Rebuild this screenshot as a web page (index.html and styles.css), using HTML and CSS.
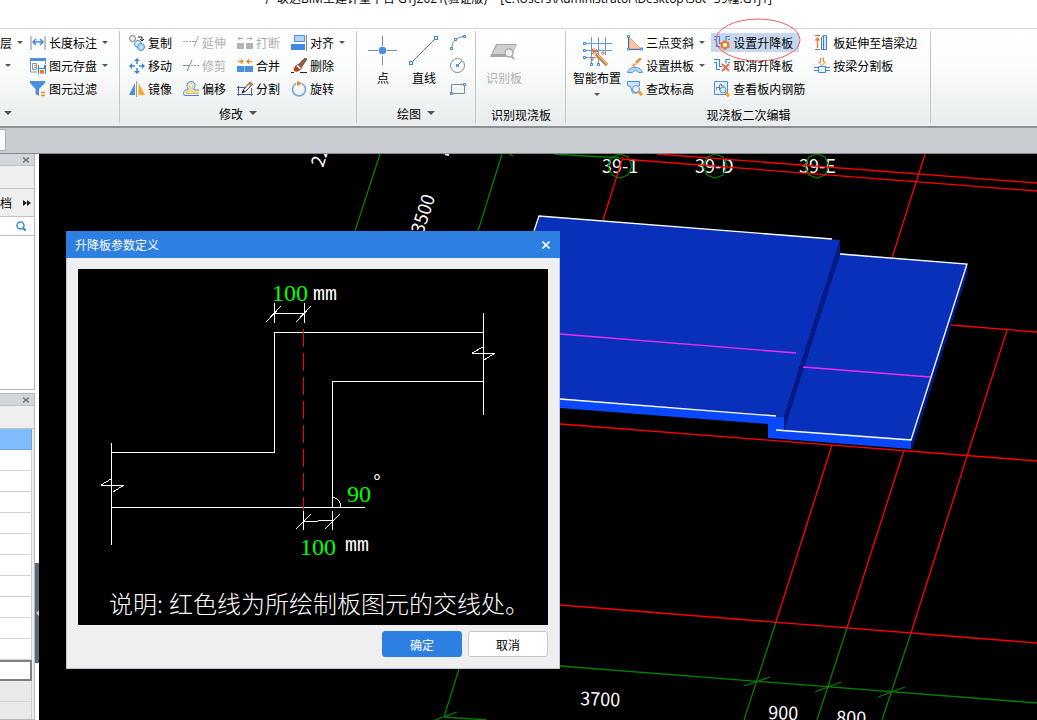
FILE: index.html
```html
<!DOCTYPE html>
<html lang="zh-CN">

<head>
	<meta charset="UTF-8" />
	<meta name="viewport" content="width=device-width, initial-scale=1.0" />
	<title>广联达BIM土建计量平台 GTJ2021</title>
	<link rel="stylesheet" href="styles.css">
</head>

<body>
	<div class="app">
		<header class="titlebar">
			<h1 class="title">广联达BIM土建计量平台 GTJ2021(验证版) -  [C:\Users\Administrator\Desktop\38、39幢.GTJ1]</h1>
		</header>

		<nav class="ribbon">
			<section class="group group-general">
				<div class="tools">
					<div class="column column-cut">
						<button class="tool" type="button">层<i class="caret"></i></button>
						<button class="tool" type="button" aria-label="更多"><i class="caret"></i></button>
					</div>
					<div class="column">
						<button class="tool" type="button">
							<svg class="icon" viewBox="0 0 16 16"><path d="M1 1v14M15 1v14" stroke="#7d8b94" fill="none" /><path d="M3 7h10M6 4 3 7l3 3M10 4l3 3-3 3" stroke="#3b87d6" stroke-width="1.4" fill="none" /></svg>
							长度标注<i class="caret"></i>
						</button>
						<button class="tool" type="button">
							<svg class="icon" viewBox="0 0 16 16"><path d="M.5 1v13H7M15.5 1v5" stroke="#7d97b0" fill="none" /><path d="M0 0h16v3H0z" fill="#4a8fdc" /><path d="M2.500 5.500h4v6h-4zM4 7.500h2M4 9.500h2" stroke="#8797a5" fill="none" /><path d="M8 7h8v8.500H8z" fill="#3f7fc8" /><path d="M9 7h5v3H9z" fill="#fff" /><path d="M9 11h6v4H9z" fill="#fff" /><path d="M10 12h4v3h-4z" fill="#f47a1c" /></svg>
							图元存盘<i class="caret"></i>
						</button>
						<button class="tool" type="button">
							<svg class="icon" viewBox="0 0 16 16"><path d="M0 0h15v2l-6 6v7L5.500 13V8L0 2z" fill="#4a90dc" /><path d="M11 11.500h4M11 14.500h4" stroke="#f0862a" stroke-width="1.500" /></svg>
							图元过滤
						</button>
					</div>
				</div>
				<h2 class="group-label label-cut"><i class="caret wide"></i></h2>
			</section>

			<section class="group group-modify">
				<div class="tools">
					<div class="column">
						<button class="tool" type="button">
							<svg class="icon" viewBox="0 0 16 16"><circle cx="3.500" cy="3.500" r="3" fill="#eee" stroke="#777" /><path d="M9 2h4v4M11 4l2 2 2-2" stroke="#222" fill="none" /><circle cx="9" cy="9" r="3.500" fill="#d8ebf8" stroke="#4a90c8" /><circle cx="12" cy="12" r="3.500" fill="#b5dcf3" stroke="#4a90c8" /></svg>
							复制
						</button>
						<button class="tool" type="button">
							<svg class="icon" viewBox="0 0 16 16"><path d="M8 1v5M8 10v5M1 8h5M10 8h5" stroke="#3b87d6" stroke-width="1.500" /><path d="M8 0l3 3H5zM8 16l3-3H5zM0 8l3-3v6zM16 8l-3-3v6z" fill="#3b87d6" /></svg>
							移动
						</button>
						<button class="tool" type="button">
							<svg class="icon" viewBox="0 0 16 16"><path d="M6 2v12H0z" fill="#4a90dc" /><path d="M9.500 2v12H16z" fill="#f9a825" /><path d="M7.500 0v16" stroke="#9a9a9a" /></svg>
							镜像
						</button>
					</div>
					<div class="column">
						<button class="tool" type="button" disabled>
							<svg class="icon" viewBox="0 0 16 16"><path d="M0 6.500h10" stroke="#aaa" stroke-dasharray="2 1" /><path d="M15.500 1 11 12M10 6.500h4" stroke="#aaa" fill="none" /></svg>
							延伸
						</button>
						<button class="tool" type="button" disabled>
							<svg class="icon" viewBox="0 0 16 16"><path d="M0 7.500h6M9 2 4 13" stroke="#888" fill="none" /><path d="M8 7.500h8" stroke="#999" stroke-dasharray="2 1" /></svg>
							修剪
						</button>
						<button class="tool" type="button">
							<svg class="icon" viewBox="0 0 16 16"><path d="M16 14.500H2Q.5 14.500.5 12.500T2.500 9H5V7Q3.500 5 4 3.500 4.500.5 8 .5t4 3Q12.500 5 11 7v2h5" fill="none" stroke="#4a86cc" /><path d="M16 12.500H3V11h4V6.500Q5.500 5 6 3.500 6.500 2.500 8 2.500t2 1Q10.500 5 9 6.500V11h7" fill="none" stroke="#f2b94a" /></svg>
							偏移
						</button>
					</div>
					<div class="column">
						<button class="tool" type="button" disabled>
							<svg class="icon" viewBox="0 0 16 16"><path d="M0 8h7v6H0zM9 8h7v6H9z" fill="#b4b4b4" /><path d="M1 3.500h5M3 1.500l-2 2 2 2M10 3.500h5M13 1.500l2 2-2 2" stroke="#aaa" fill="none" /></svg>
							打断
						</button>
						<button class="tool" type="button">
							<svg class="icon" viewBox="0 0 16 16"><path d="M0 8h7.500v6H0zM8 8h8v6H8z" fill="#4a90dc" /><path d="M1 3.500h5M4 1.500l2 2-2 2M15 3.500h-5M12 1.500l-2 2 2 2" stroke="#e88a25" stroke-width="1.300" fill="none" /></svg>
							合并
						</button>
						<button class="tool" type="button">
							<svg class="icon" viewBox="0 0 16 16"><path d="M1.500 5v10M14.500 7v8M0 6.500h10M0 13.500h16" stroke="#44619c" fill="none" /><path d="M5 12l2-4 6-7 2.500 2L9 10z" fill="#fff" stroke="#333" /><path d="M11 3l2-2.500 2.500 2L13 5z" fill="#d97a45" /><path d="M5 12l1-3 2 1.500z" fill="#222" /></svg>
							分割
						</button>
					</div>
					<div class="column">
						<button class="tool" type="button">
							<svg class="icon" viewBox="0 0 16 16"><path d="M3.500.5h10v6h-10z" fill="#b5d2f8" stroke="#4a90dc" /><path d="M0 9h14v6H0z" fill="#3f8ade" /><path d="M15.500 0v16" stroke="#888" /></svg>
							对齐<i class="caret"></i>
						</button>
						<button class="tool" type="button">
							<svg class="icon" viewBox="0 0 16 16"><path d="M7 7l7-7 2 1-6 9z" fill="#9b603a" stroke="#4c2c1a" stroke-width=".7" /><path d="M4.500 8 7 6.500 10.500 10 9 12z" fill="#eee" stroke="#333" stroke-width=".7" /><path d="M3 13q-1-4 2-5l4 4q-2 3-6 1z" fill="#c83c14" /><path d="M0 14.500h3M9 14.500h7" stroke="#222" /></svg>
							删除
						</button>
						<button class="tool" type="button">
							<svg class="icon" viewBox="0 0 16 16"><path d="M11 2.700A6.500 6.500 0 1 1 5 2.700" stroke="#68a2e0" stroke-width="1.500" fill="none" /><path d="M6 0l5 2.200L6 5z" fill="#f08420" /></svg>
							旋转
						</button>
					</div>
				</div>
				<h2 class="group-label">修改<i class="caret wide"></i></h2>
			</section>

			<section class="group group-draw">
				<div class="tools">
					<button class="tool-big" type="button">
						<svg class="icon-big" viewBox="0 0 30 30"><path d="M14.500 0v10M14.500 20v9M0 14.500h10M19 14.500h10" stroke="#7d8b94" fill="none" /><circle cx="14.500" cy="14.500" r="3.800" fill="#4a90e2" /></svg>
						点
					</button>
					<button class="tool-big" type="button">
						<svg class="icon-big" viewBox="0 0 30 30"><path d="M3 26 26 3" stroke="#666f76" /><path d="M.5 25.500h3v3h-3zM25.500.5h3v3h-3z" fill="#fff" stroke="#3b87d6" stroke-width="1.200" /></svg>
						直线
					</button>
					<div class="column">
						<button class="tool" type="button" aria-label="弧线">
							<svg class="icon" viewBox="0 0 16 16"><path d="M1.500 13Q3 2 14 1.500" stroke="#7d8b94" fill="none" /><path d="M.5 12.500h2v2h-2zM4.500 3.500h2v2h-2zM13.500.5h2v2h-2z" fill="#fff" stroke="#3b87d6" /></svg>
						</button>
						<button class="tool" type="button" aria-label="圆">
							<svg class="icon" viewBox="0 0 16 16"><circle cx="7.500" cy="7.500" r="7" fill="none" stroke="#7d8b94" /><path d="M8 7l4-4" stroke="#3b87d6" /><path d="M6.500 6.500h2v2h-2z" fill="#fff" stroke="#3b87d6" /></svg>
						</button>
						<button class="tool" type="button" aria-label="矩形">
							<svg class="icon" viewBox="0 0 16 16"><path d="M1.500 3.500h13v9h-13z" fill="none" stroke="#7d8b94" /><path d="M.5 11.500h2v2h-2zM13.500 2.500h2v2h-2z" fill="#fff" stroke="#3b87d6" /></svg>
						</button>
					</div>
				</div>
				<h2 class="group-label">绘图<i class="caret wide"></i></h2>
			</section>

			<section class="group group-detect">
				<div class="tools">
					<button class="tool-big" type="button" disabled>
						<svg class="icon-big" viewBox="0 0 30 30"><path d="M7 8h21l-6 13H1z" fill="#a5a5a5" /><path d="M8 9h19l-4.500 9H3.500z" fill="#cfcfcf" /><circle cx="20" cy="17" r="4" fill="#eee" stroke="#aaa" stroke-width="1.500" /><path d="M22 20l3 3" stroke="#aaa" stroke-width="2" /></svg>
						识别板
					</button>
				</div>
				<h2 class="group-label label-plain">识别现浇板</h2>
			</section>

			<section class="group group-slab">
				<div class="tools">
					<button class="tool-big" type="button">
						<svg class="icon-big" viewBox="0 0 30 30"><path d="M9.500 1v28M16.500 1v28M23.500 1v18M2 7.500h28M2 14.500h28M2 21.500h12" stroke="#5b9be0" fill="none" /><path d="M1.500 6.500h2v2h-2zM1.500 13.500h2v2h-2zM1.500 20.500h2v2h-2zM8.500 27.500h2v2h-2zM15.500 27.500h2v2h-2z" fill="#fff" stroke="#3b87d6" /><path d="M14 18l11 11" stroke="#c88445" stroke-width="3.500" /><path d="M14 17l11 11" stroke="#f3cfa5" /><path d="M12 12v7M9 15.500h7M10 13l5 5M15 13l-5 5M21 15v4M19 17h4M10 21v4M8 23h4" stroke="#f06a30" /></svg>
						智能布置<i class="caret"></i>
					</button>
					<div class="columns">
						<div class="column">
							<button class="tool" type="button">
								<svg class="icon" viewBox="0 0 16 16"><path d="M2 2l12 12H2z" fill="#f9c6a0" stroke="#e49b6a" /><path d="M1.500 1v14M2 14.500h12" stroke="#3b6ea8" /><path d="M.5.5h2v2h-2zM.5 13h2v2h-2zM13.500 13h2v2h-2z" fill="#fff" stroke="#3b87d6" /></svg>
								三点变斜<i class="caret"></i>
							</button>
							<button class="tool" type="button">
								<svg class="icon" viewBox="0 0 16 16"><path d="M14 0 9 5M8 6 6 8" stroke="#f08a35" stroke-width="2.500" /><path d="M6 6l2 2-3 1z" fill="#f6b16b" /><path d="M.5 14.500Q2 9 8 9.500q6-.5 7.500 5h-4q-3-4-6 0z" fill="#b9d3f3" stroke="#5b95d5" /></svg>
								设置拱板<i class="caret"></i>
							</button>
							<button class="tool" type="button">
								<svg class="icon" viewBox="0 0 16 16"><path d="M.5.500h12v4l-2 1V12h-5L3.500 5.500l-3-1z" fill="#cfe2f8" stroke="#4a90dc" /><circle cx="9" cy="8" r="3.500" fill="#e5f1ff" stroke="#6993cc" /><path d="M11.500 10.500l3.500 3.500" stroke="#f09a25" stroke-width="3" /></svg>
								查改标高
							</button>
						</div>
						<div class="column">
							<button class="tool active" type="button">
								<svg class="icon" viewBox="0 0 16 16"><path d="M0 1.500h5.500v7H8M0 4.500h2.500v7H6M16 1.500h-4v4M16 4.500h-2" stroke="#3b87d6" stroke-width="1.200" fill="none" /><circle cx="11" cy="10" r="3.200" fill="#fff" stroke="#f07a28" stroke-width="2.200" /><path d="M11 5v2M11 13v2M6.700 7.500l1.600 1M13.700 11.500l1.600 1M6.700 12.500l1.600-1M13.700 8.500l1.600-1" stroke="#f07a28" stroke-width="1.800" /></svg>
								设置升降板
								<svg class="ring" viewBox="0 0 86 44"><ellipse cx="43" cy="22" rx="42" ry="21" fill="none" stroke="#ee5a62" /></svg>
							</button>
							<button class="tool" type="button">
								<svg class="icon" viewBox="0 0 16 16"><path d="M0 1.500h5.500v7H8M0 4.500h2.500v7H6M16 1.500h-4v4M16 4.500h-2" stroke="#3b87d6" stroke-width="1.200" fill="none" /><path d="M8 6l7 7M15 6l-7 7" stroke="#e0705a" stroke-width="2" /></svg>
								取消升降板
							</button>
							<button class="tool" type="button">
								<svg class="icon" viewBox="0 0 16 16"><path d="M.5.500h13v13H.500z" fill="#e6f1fc" stroke="#4a90dc" /><path d="M2.500 8.500V6.500h3M5.500 9V4.500q0-1.500 2-1.500v2h3" stroke="#6b7a88" fill="none" /><circle cx="9" cy="9" r="3" fill="#d5e8fb" stroke="#5f93cf" /><path d="M11.500 11.500 15 15" stroke="#f09a25" stroke-width="3" /></svg>
								查看板内钢筋
							</button>
						</div>
						<div class="column">
							<button class="tool" type="button">
								<svg class="icon" viewBox="0 0 16 16"><path d="M1 .500h5M1 14.500h5" stroke="#777" /><path d="M3.500 13V3M1.500 5.500l2-2.500 2 2.500" stroke="#ef7d25" stroke-width="1.400" fill="none" /><path d="M7.500 2.500l2-2h3v14h-5z" fill="#d6e7fa" stroke="#3b87d6" /><path d="M9.500 1v13" stroke="#3b87d6" /></svg>
								板延伸至墙梁边
							</button>
							<button class="tool" type="button">
								<svg class="icon" viewBox="0 0 16 16"><path d="M6.500 0h3v4h2L8 7.500 4.500 4h2z" fill="#fff" stroke="#f0862a" /><path d="M4.500 8.500h7v6h-7z" fill="#e8f2fd" stroke="#3b87d6" /><path d="M0 9.500h4M12 9.500h4M0 12.500h4M12 12.500h4" stroke="#3b87d6" /></svg>
								按梁分割板
							</button>
						</div>
					</div>
				</div>
				<h2 class="group-label label-plain">现浇板二次编辑</h2>
			</section>
		</nav>

		<div class="tabstrip"><div class="tab"></div></div>

		<main class="workspace">
			<aside class="sidebar">
				<section class="panel panel-nav">
					<div class="panel-head"><button class="panel-close" type="button" aria-label="关闭"><svg viewBox="0 0 6 6"><path d="M0 .500 6 5.500M6 .500 0 5.500" /></svg></button></div>
					<div class="panel-bar"></div>
					<div class="panel-tabs"><span>档</span><svg class="more" viewBox="0 0 8 6"><path d="M0 0l4 3-4 3zM4 0l4 3-4 3z" fill="#222" /></svg></div>
					<div class="panel-search"><svg viewBox="0 0 10 10"><circle cx="4.500" cy="4.500" r="3.500" fill="none" stroke="#3b8fc4" stroke-width="1.500" /><path d="M7 7l3 3" stroke="#3b8fc4" stroke-width="2" /></svg></div>
					<div class="panel-list"></div>
				</section>
				<section class="panel panel-props">
					<div class="panel-head"><button class="panel-close" type="button" aria-label="关闭"><svg viewBox="0 0 6 6"><path d="M0 .500 6 5.500M6 .500 0 5.500" /></svg></button></div>
					<div class="panel-bar"></div>
					<div class="rows">
						<div class="row selected"></div>
						<div class="row"></div>
						<div class="row"></div>
						<div class="row"></div>
						<div class="row"></div>
						<div class="row"></div>
						<div class="row"></div>
						<div class="row"></div>
						<div class="row"></div>
						<div class="row"></div>
						<div class="row"></div>
						<div class="row focused"></div>
						<div class="row muted"></div>
						<div class="row muted"></div>
					</div>
				</section>
				<button class="splitter" type="button" aria-label="收起"><svg viewBox="0 0 3 6"><path d="M3 0v6L0 3z" fill="#c8cbd0" /></svg></button>
			</aside>

			<div class="canvas">
				<svg class="scene">
					<g transform="translate(-39 -154)">
						<!-- axis labels -->
						<g class="scene-text">
							<text x="602" y="173">39-1</text>
							<text x="695" y="173">39-D</text>
							<text x="799" y="173">39-E</text>
							<text transform="translate(323 168) rotate(-72)">2200</text>
							<text transform="translate(423 235) rotate(-72)">3500</text>
							<text transform="translate(580 705) rotate(2)">3700</text>
							<text transform="translate(768 719) rotate(2)">900</text>
							<text transform="translate(836 724) rotate(2)">800</text>
						</g>
						<path d="M445 154l4 1" stroke="#fff" stroke-width="2" />

						<!-- dimension lines -->
						<g class="line-green">
							<path d="M380 154 355 231M502 154 478 231M508 153l5 3M459 669 444 717M435 720l22-8M444 717l43 3" />
							<path d="M554 154 621 158M560 666 1037 703" />
							<path d="M776 622 744 720M847 628 817 720M911 633 882 720" />
							<path d="M744 686 770 677M815 692 841 682M878 697 905 687" />
							<path d="M620 154l8 3 4 9-4 9-8 3-8-3-4-9 4-9z" />
							<path d="M715 154l8 3 4 9-4 9-8 3-8-3-4-9 4-9z" />
							<path d="M817 154l8 3 4 9-4 9-8 3-8-3-4-9 4-9z" />
						</g>

						<!-- grid axes -->
						<g class="line-red">
							<path d="M657 154 1037 183M622 159 1037 191" />
							<path d="M623 157 603 220M925 154 892 258" />
							<path d="M950 325 1037 332M1007 330 911 633" />
							<path d="M560 424 1037 461M560 605 1037 643" />
							<path d="M832 445 776 622M904 450 847 628" />
						</g>

						<!-- slab -->
						<path d="M483 393 784 417V430L911 440V449L768 438V424L483 402z" fill="#0a48ff" />
						<path d="M539 216 840 240 784 417 483 393z" fill="#0830bb" />
						<path d="M840 253 967 264 911 440 784 430z" fill="#0830bb" />
						<path d="M840 240V255L784 429V417z" fill="#001a88" />
						<path d="M967 264 968 272 912 449 911 440z" fill="#001a88" />
						<path class="line-white" d="M534 231 539 216 832 239M840 254 967 264 911 440 776 430M560 399 776 416" />
						<path class="line-magenta" d="M560 334 796 353M803 367 930 377" />
					</g>
				</svg>

				<section class="dialog" role="dialog" aria-labelledby="dialog-title">
					<header class="dialog-head">
						<h2 class="dialog-title" id="dialog-title">升降板参数定义</h2>
						<button class="dialog-close" type="button" aria-label="关闭"><svg viewBox="0 0 8 8"><path d="M.500.500l7 7M7.500.500l-7 7" stroke="#fff" stroke-width="1.600" /></svg></button>
					</header>
					<div class="dialog-body">
						<svg class="diagram" viewBox="78 269 470 356">
							<g class="outline">
								<path d="M111.500 452.500H274.500V332.500H484M111 507.500H365M332.500 507V381.500H483.500" />
								<path d="M111.500 443V545M483.500 313V415" />
								<path d="M101 485.500H124M101 485 111 479M124 485 113 492" />
								<path d="M472 353.500H495M472 353 483 347M495 353 484 360" />
								<path d="M274.500 303V323M304.500 303V323M274 313.500H304M266 322 281 306M296 322 311 306" />
								<path d="M303.500 511V530M332.500 511V530M304 521.500H318M318 520.500H333M296 529 311 514M325 529 340 514" />
								<path d="M333 497Q341 500 341 507" />
							</g>
							<path class="cut" d="M303.500 329V511" />
							<text class="value" x="272" y="301">100</text>
							<text class="unit" x="313" y="300">mm</text>
							<text class="value" x="347" y="502">90</text>
							<text class="unit" x="371" y="488">°</text>
							<text class="value" x="300" y="555">100</text>
							<text class="unit" x="345" y="551">mm</text>
							<text class="note" x="109" y="613">说明:</text>
							<text class="note" x="169" y="613">红色线为所绘制板图元的交线处。</text>
						</svg>
						<footer class="dialog-actions">
							<button class="btn btn-primary" type="button">确定</button>
							<button class="btn" type="button">取消</button>
						</footer>
					</div>
				</section>
			</div>
		</main>
	</div>
</body>

</html>
```
FILE: styles.css
```css
* {
	box-sizing: border-box;
}

body {
	margin: 0;
	font-family: "Noto Sans CJK SC", sans-serif;
	font-size: 12px;
	color: #000;
}

button {
	font: inherit;
	color: inherit;
	background: none;
	border: 0;
	padding: 0;
	margin: 0;
	white-space: nowrap;
}

h1,
h2 {
	margin: 0;
	font-size: 12px;
	font-weight: 400;
}

svg {
	display: block;
}

.app {
	display: flex;
	flex-direction: column;
	height: 100vh;
	overflow: hidden;
}

/* title bar */
.titlebar {
	flex: none;
	height: 28px;
	overflow: hidden;
	background: #fff;
}

.title {
	margin-top: -11px;
	padding-left: 265px;
	font-family: "Open Sans", "Noto Sans CJK SC", sans-serif;
	line-height: 20px;
	white-space: pre;
}

/* ribbon */
.ribbon {
	flex: none;
	display: flex;
	padding: 2px 0 3px;
	border-top: 1px solid #d9d9d9;
	border-bottom: 2px solid #8e9194;
	background: linear-gradient(#fff 0%, #fbfcfc 40%, #e8ecec 100%);
}

.group {
	flex: none;
	display: flex;
	flex-direction: column;
	border-right: 1px solid #c3c5c7;
}

.tools {
	display: flex;
	height: 70px;
}

.group-general .tools {
	padding-right: 11px;
	gap: 9px;
}

.group-modify .tools {
	gap: 11px;
	padding-left: 9px;
	padding-right: 11px;
}

.group-draw .tools {
	padding-left: 11px;
	padding-right: 9px;
}

.group-draw .tool-big {
	width: 30px;
	margin-right: 11px;
}

.group-detect .tools {
	padding-left: 10px;
}

.group-slab .tools {
	gap: 6px;
	padding-left: 7px;
	padding-right: 13px;
}

.columns {
	display: flex;
	gap: 9px;
}

.column {
	display: grid;
	grid-template-rows: repeat(3, 23px);
	align-content: start;
	align-items: center;
	justify-items: start;
}

.column-cut {
	width: 21px;
	justify-items: end;
}

.column-cut .tool + .tool {
	margin-right: 12px;
}

.tool {
	position: relative;
	display: flex;
	align-items: center;
	gap: 3px;
	height: 19px;
}

.tool:disabled,
.tool-big:disabled {
	color: #b0b0b0;
}

.tool.active {
	margin: 0 -6px 0 -3px;
	padding: 0 6px 0 3px;
	background: #c5d8f0;
}

/* hand-drawn mark around the active tool */
.ring {
	position: absolute;
	left: 4px;
	top: -15px;
	width: 86px;
	height: 44px;
	pointer-events: none;
}

.tool-big {
	display: flex;
	flex-direction: column;
	align-items: center;
	line-height: 24px;
	padding-top: 5px;
}

.icon {
	width: 16px;
	height: 16px;
}

.icon-big {
	flex: none;
	width: 30px;
	height: 30px;
}

.caret {
	flex: none;
	border: 3px solid transparent;
	border-top-color: #555;
	border-bottom: 0;
}

.tool .caret {
	margin-left: 2px;
}

.caret.wide {
	border-width: 4px 4px 0;
}

.tool-big .caret {
	margin-top: 3px;
}

.group-label {
	display: flex;
	align-items: center;
	justify-content: center;
	gap: 6px;
	height: 22px;
	padding-top: 2px;
}

.group-label.label-plain {
	padding: 4px 14px 0 15px;
}

.group-label.label-cut {
	justify-content: flex-start;
	padding-left: 4px;
}

.tabstrip {
	flex: none;
	height: 26px;
	padding: 1px 0 2px;
	background: #c9ccd1;
	border-bottom: 1px solid #85888c;
}

.tab {
	width: 6px;
	height: 100%;
	background: #fff;
	border: 1px solid #aaa;
	border-left: 0;
}

/* workspace */
.workspace {
	flex: 1;
	display: flex;
	min-height: 0;
}

.sidebar {
	position: relative;
	flex: none;
	display: flex;
	flex-direction: column;
	gap: 3px;
	width: 39px;
	padding-right: 4px;
	background: #fff;
}

.panel {
	display: flex;
	flex-direction: column;
	border: 1px solid #b5b6b9;
	border-left: 0;
}

.panel-nav {
	height: 236px;
	border-top: 0;
}

.panel-props {
	flex: 1;
	min-height: 0;
	overflow: hidden;
	background: #efefef;
}

.panel-head {
	flex: none;
	display: flex;
	align-items: center;
	justify-content: flex-end;
	height: 12px;
	padding-right: 5px;
	background: #d2d5da;
	border-bottom: 1px solid #bcc0c8;
}

.panel-close svg {
	width: 6px;
	height: 6px;
	stroke: #777;
	stroke-width: 1.4;
}

.panel-bar {
	flex: none;
	height: 23px;
	background: #efefef;
	border-bottom: 1px solid #c0c2c8;
}

.panel-tabs {
	flex: none;
	display: flex;
	align-items: center;
	justify-content: space-between;
	height: 28px;
	padding-right: 3px;
	background: #efefef;
	border-bottom: 1px solid #c0c2c8;
}

.more {
	width: 8px;
	height: 6px;
}

.panel-search {
	flex: none;
	display: flex;
	align-items: center;
	justify-content: flex-end;
	height: 19px;
	padding-right: 8px;
	border-bottom: 1px solid #c0c2c8;
}

.panel-search svg {
	width: 10px;
	height: 10px;
}

.panel-list {
	flex: 1;
	background: #fff;
}

.rows {
	margin-right: 2px;
}

.row {
	height: 21px;
	background: #fff;
	border-right: 1px solid #d0d0d0;
	border-bottom: 1px solid #d3d3d3;
}

.row.selected {
	background: #80bcfb;
	border-color: #6aa6e6;
}

.row.focused {
	border: 2px solid #808080;
	border-left: 0;
}

.row.muted {
	background: #e9e9e9;
}

.splitter {
	position: absolute;
	right: 0;
	top: 409px;
	display: flex;
	align-items: center;
	width: 4px;
	height: 100px;
	padding-left: 1px;
	background: #5b6875;
}

.splitter svg {
	width: 3px;
	height: 6px;
}

.canvas {
	position: relative;
	flex: 1;
	min-width: 0;
	overflow: hidden;
	background: #000;
}

.scene {
	width: 100%;
	height: 100%;
}

.scene-text {
	fill: #fff;
	font-size: 18px;
}

.line-green,
.line-red,
.line-white,
.line-magenta {
	fill: none;
	stroke-width: 1.3;
}

.line-green {
	stroke: #008000;
}

.line-red {
	stroke: #f00;
}

.line-white {
	stroke: #fff;
}

.line-magenta {
	stroke: #f32cf3;
}

/* dialog */
.dialog {
	position: absolute;
	left: 27px;
	top: 77px;
	width: 494px;
	background: #efefef;
}

.dialog-head {
	display: flex;
	align-items: center;
	justify-content: space-between;
	height: 27px;
	padding: 0 10px 0 9px;
	background: #2d80e2;
	color: #fff;
}

.dialog-close svg {
	width: 8px;
	height: 8px;
}

.dialog-body {
	padding: 11px;
	border: 1px solid #bcc6da;
	border-top: 0;
}

.diagram {
	width: 100%;
	background: #000;
}

.outline {
	fill: none;
	stroke: #fff;
	shape-rendering: crispEdges;
}

.cut {
	stroke: #f00;
	stroke-dasharray: 18 6;
	shape-rendering: crispEdges;
}

.value {
	fill: #0f0;
	font-family: "Liberation Serif", serif;
	font-size: 24px;
}

.unit {
	fill: #fff;
	font-family: "Liberation Mono", monospace;
	font-size: 20px;
}

.note {
	fill: #fff;
	font-size: 24px;
	font-weight: 300;
}

.dialog-actions {
	display: flex;
	justify-content: flex-end;
	gap: 6px;
	padding-top: 6px;
}

.btn {
	width: 80px;
	height: 26px;
	background: #fff;
	border: 1px solid #c8c8c8;
	border-radius: 3px;
}

.btn-primary {
	background: #2d80e2;
	border-color: #2d80e2;
	color: #fff;
}
```
